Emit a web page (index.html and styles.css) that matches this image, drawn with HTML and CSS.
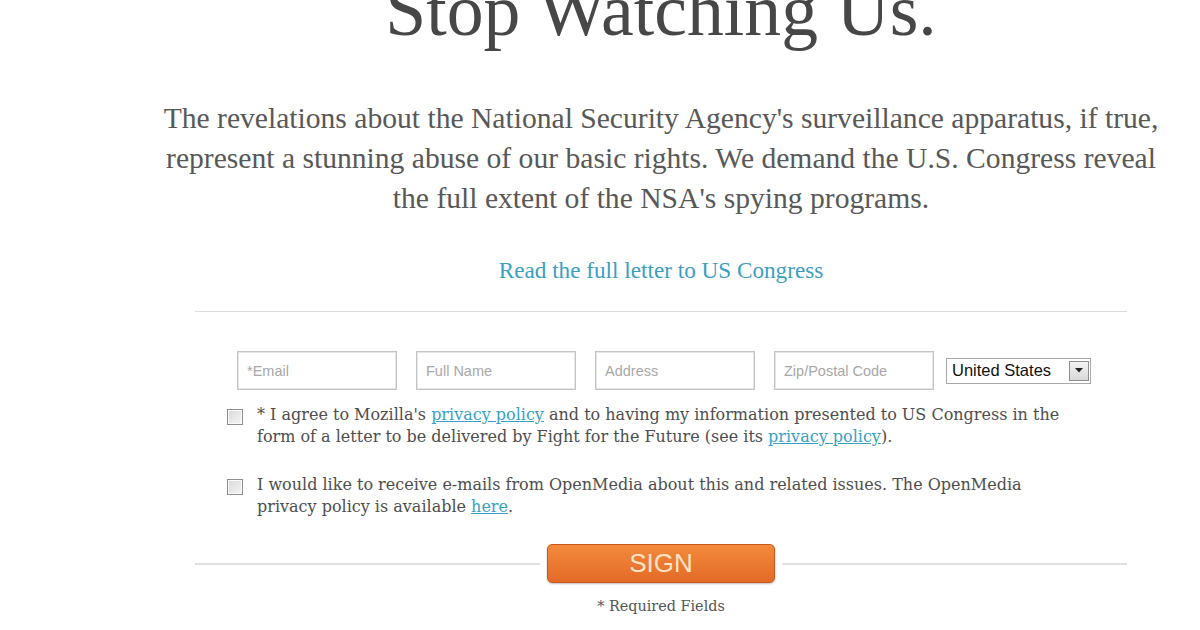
FILE: index.html
```html
<!DOCTYPE html>
<html>
<head>
<meta charset="utf-8">
<link rel="stylesheet" href="styles.css">
</head>
<body>
<div class="page">
  <h1 class="title">Stop Watching Us.</h1>
  <p class="lead">The revelations about the National Security Agency's surveillance apparatus, if true,<br>represent a stunning abuse of our basic rights. We demand the U.S. Congress reveal<br>the full extent of the NSA's spying programs.</p>
  <a class="letter-link" href="#">Read the full letter to US Congress</a>
  <div class="form">
    <div class="rule"></div>
    <div class="fields">
      <div class="field"><span class="ph">*Email</span></div>
      <div class="field"><span class="ph">Full Name</span></div>
      <div class="field"><span class="ph">Address</span></div>
      <div class="field"><span class="ph">Zip/Postal Code</span></div>
      <div class="select">
        <span class="select-value">United States</span>
        <span class="select-btn"><svg width="8" height="5" viewBox="0 0 8 5"><path d="M0 0 L8 0 L4 4.5 Z" fill="#222"/></svg></span>
      </div>
    </div>
    <div class="check-row">
      <span class="box"></span>
      <p class="check-text">* I agree to Mozilla's <a href="#">privacy policy</a> and to having my information presented to US Congress in the<br>form of a letter to be delivered by Fight for the Future (see its <a href="#">privacy policy</a>).</p>
    </div>
    <div class="check-row second">
      <span class="box"></span>
      <p class="check-text">I would like to receive e-mails from OpenMedia about this and related issues. The OpenMedia<br>privacy policy is available <a href="#">here</a>.</p>
    </div>
    <div class="sign-row">
      <span class="line"></span>
      <button class="sign">SIGN</button>
      <span class="line"></span>
    </div>
    <p class="required">* Required Fields</p>
  </div>
</div>
</body>
</html>
```

FILE: styles.css
```css
html, body {
  margin: 0;
  padding: 0;
  background: #fff;
}
.page {
  width: 1000px;
  margin-left: 161px;
  text-align: center;
  overflow: visible;
}
.title {
  margin: -26px 0 0;
  padding-bottom: 4px;
  font-family: "Liberation Serif", serif;
  font-weight: normal;
  font-size: 73.7px;
  line-height: 72px;
  color: #474747;
  white-space: nowrap;
}
.lead {
  margin: 48px -40px 0;
  font-family: "Liberation Serif", serif;
  font-size: 29.6px;
  line-height: 40px;
  color: #585858;
  white-space: nowrap;
}
.letter-link {
  display: block;
  margin-top: 37px;
  font-family: "Liberation Serif", serif;
  font-size: 23.2px;
  line-height: 30px;
  color: #3b9ec2;
  text-decoration: none;
}
.form {
  width: 932px;
  margin: 0 auto;
  text-align: left;
}
.rule {
  margin-top: 26px;
  height: 1px;
  background: #dcdcdc;
}
.fields {
  display: flex;
  align-items: center;
  gap: 19px;
  margin-top: 39px;
  padding-left: 42px;
}
.field {
  box-sizing: border-box;
  width: 160px;
  height: 39px;
  border: 1px solid #c4c4c4;
  box-shadow: inset 0 0 0 1px #e6e6e6;
  display: flex;
  align-items: center;
  padding-left: 9px;
}
.ph {
  font-family: "Liberation Sans", Arial, sans-serif;
  font-size: 14.5px;
  color: #a8a8a8;
}
.select {
  box-sizing: border-box;
  margin-left: -7px;
  width: 145px;
  height: 26px;
  border: 1px solid #a8a8a8;
  display: flex;
  align-items: center;
  justify-content: space-between;
  padding: 0 1px 0 5px;
}
.select-value {
  font-family: "Liberation Sans", Arial, sans-serif;
  font-size: 16.5px;
  color: #111;
}
.select-btn {
  box-sizing: border-box;
  width: 20px;
  height: 20px;
  border: 1px solid #8e8e8e;
  background: linear-gradient(#f4f4f4, #d8d8d8);
  display: flex;
  align-items: center;
  justify-content: center;
}
.check-row {
  display: flex;
  align-items: flex-start;
  gap: 14px;
  margin-top: 14px;
  padding-left: 32px;
}
.check-row.second {
  margin-top: 26px;
}
.box {
  flex: none;
  box-sizing: border-box;
  width: 16px;
  height: 16px;
  margin-top: 5px;
  border: 1px solid #8f8f8f;
  background: linear-gradient(135deg, #d8d8d8, #f6f6f6);
  box-shadow: inset 0 0 0 1px #fafafa;
}
.check-text {
  margin: 0;
  font-family: "DejaVu Serif", serif;
  font-size: 16px;
  line-height: 22px;
  color: #4e4e4e;
  white-space: nowrap;
}
.check-text a {
  color: #3a9fc8;
  text-decoration: underline;
}
.sign-row {
  display: flex;
  align-items: center;
  gap: 7px;
  margin-top: 26px;
}
.line {
  flex: 1;
  height: 2px;
  background: #e0e0e0;
}
.sign {
  width: 228px;
  height: 39px;
  border: 1px solid #c9571a;
  border-radius: 5px;
  background: linear-gradient(#f38a3c, #e36a27);
  box-shadow: 0 1px 2px rgba(0,0,0,0.25);
  color: #fde3c6;
  font-family: "Liberation Sans", Arial, sans-serif;
  font-size: 26px;
  line-height: 37px;
  padding: 0;
}
.required {
  margin: 14px 0 0;
  text-align: center;
  font-family: "DejaVu Serif", serif;
  font-size: 14.4px;
  line-height: 18px;
  color: #555;
}
```
